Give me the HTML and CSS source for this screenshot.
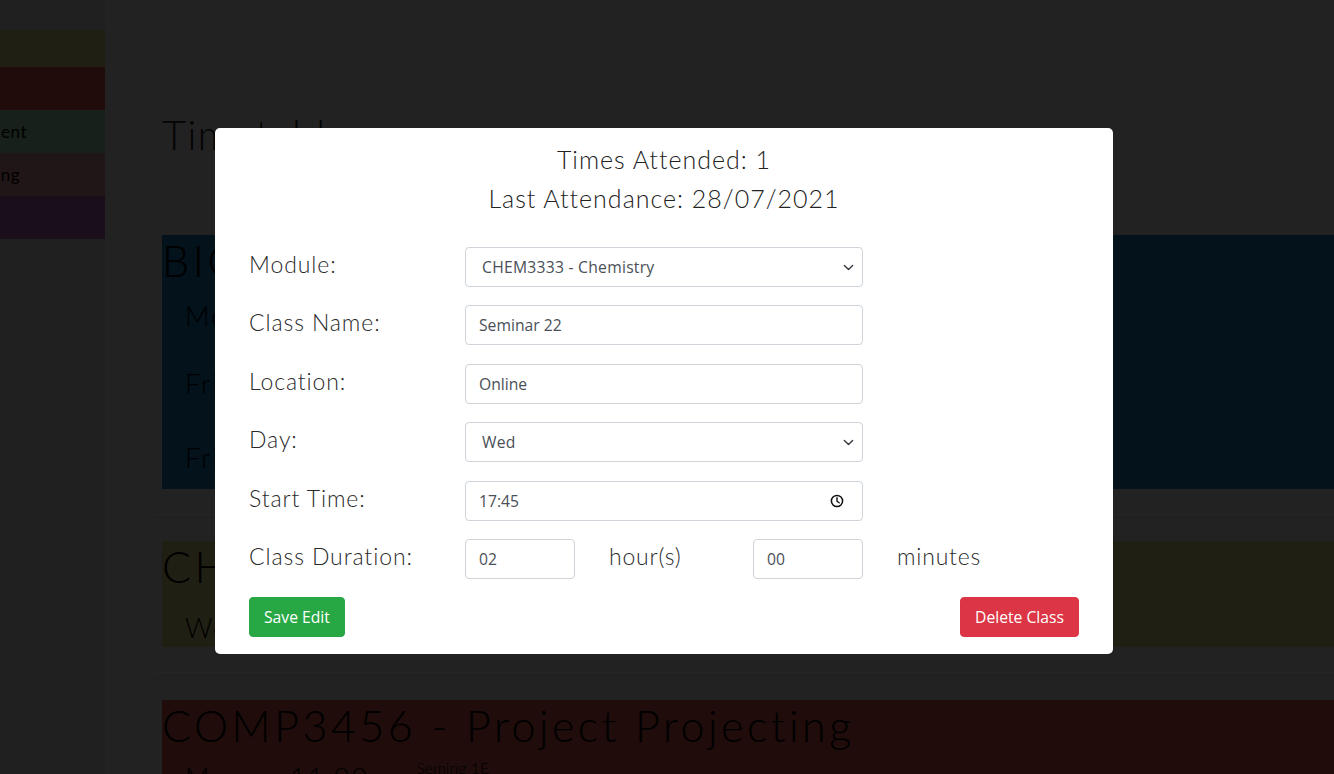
FILE: index.html
```html
<!DOCTYPE html>
<html lang="en">
<head>
<meta charset="utf-8">
<title>Timetable</title>
<link rel="stylesheet" href="styles.css">
</head>
<body>
<div class="page">
  <aside class="sidebar">
    <div class="side-item olive"><span class="clip"></span></div>
    <div class="side-item red"><span class="clip"></span></div>
    <div class="side-item green"><span class="clip">Assessment</span></div>
    <div class="side-item rose"><span class="clip">Programming</span></div>
    <div class="side-item purple"><span class="clip"></span></div>
  </aside>
  <main class="main">
    <h1 class="title">Timetable</h1>
    <section class="card card-blue">
      <h2 class="card-title">BIO2222 - Biology</h2>
      <div class="card-row">Mon</div>
      <div class="card-row">Fri</div>
      <div class="card-row">Fri</div>
    </section>
    <hr class="divider">
    <section class="card card-olive">
      <h2 class="card-title">CHEM3333 - Chemistry</h2>
      <div class="card-row">Wed</div>
    </section>
    <hr class="divider">
    <section class="card card-red">
      <h2 class="card-title">COMP3456 - Project Projecting</h2>
      <div class="card-row"><span class="day">Mon</span><span class="time">11:00</span><span class="loc">Seming 1E</span></div>
    </section>
  </main>
</div>

<div class="modal">
  <div class="stats">
    <div>Times Attended: 1</div>
    <div>Last Attendance: 28/07/2021</div>
  </div>
  <form class="form">
    <div class="form-row">
      <label class="label">Module:</label>
      <select class="control select">
        <option>CHEM3333 - Chemistry</option>
      </select>
    </div>
    <div class="form-row">
      <label class="label">Class Name:</label>
      <input class="control" type="text" value="Seminar 22">
    </div>
    <div class="form-row">
      <label class="label">Location:</label>
      <input class="control" type="text" value="Online">
    </div>
    <div class="form-row">
      <label class="label">Day:</label>
      <select class="control select">
        <option>Wed</option>
      </select>
    </div>
    <div class="form-row">
      <label class="label">Start Time:</label>
      <div class="time-wrap">
        <input class="control" type="text" value="17:45">
        <svg class="clock" width="14" height="14" viewBox="0 0 14 14" aria-hidden="true">
          <circle cx="7" cy="7" r="5.6" fill="none" stroke="#111" stroke-width="1.5"/>
          <path d="M7 3.8V7.2L9.2 8.8" fill="none" stroke="#111" stroke-width="1.4" stroke-linecap="round"/>
        </svg>
      </div>
    </div>
    <div class="form-row">
      <label class="label">Class Duration:</label>
      <div class="duration">
        <input class="control small" type="text" value="02">
        <span class="unit">hour(s)</span>
        <input class="control small" type="text" value="00">
        <span class="unit">minutes</span>
      </div>
    </div>
    <div class="actions">
      <button type="button" class="btn btn-green">Save Edit</button>
      <button type="button" class="btn btn-red">Delete Class</button>
    </div>
  </form>
</div>
</body>
</html>
```
FILE: styles.css
```css
html, body {
  margin: 0;
  height: 100%;
  overflow: hidden;
}
body {
  background: #222222;
  font-family: "Lato", "DejaVu Sans", sans-serif;
  font-weight: 300;
  color: #000;
}
.page {
  display: flex;
  height: 774px;
  overflow: hidden;
}
.sidebar {
  width: 105px;
  flex: none;
  background: #202020;
  padding-top: 30px;
  overflow: hidden;
}
.side-item {
  height: 43px;
  display: flex;
  align-items: center;
  font-size: 17px;
  font-weight: 400;
  letter-spacing: 0.5px;
}
.side-item:first-child { height: 37px; }
.clip {
  display: inline-block;
  width: 27px;
  overflow: hidden;
  white-space: nowrap;
  direction: rtl;
  text-align: left;
}
.rose .clip { width: 20px; }
.olive { background: #201f14; }
.red { background: #1f0c0b; }
.green { background: #17201a; }
.rose { background: #201617; }
.purple { background: #1a0e1a; }

.main {
  flex: 1;
  padding: 110px 0 0 57px;
  min-width: 0;
}
.title {
  margin: 0;
  font-size: 42px;
  font-weight: 300;
  line-height: 48px;
  letter-spacing: 1px;
  color: #050505;
}
.card {
  margin-right: -40px;
}
.card-blue {
  margin-top: 77px;
  height: 254px;
  background: #03121b;
}
.card-olive {
  height: 106px;
  background: #201f14;
}
.card-red {
  height: 120px;
  background: #1f0c0b;
}
.card-title {
  margin: 0;
  padding-top: 2px;
  font-size: 43px;
  font-weight: 300;
  line-height: 48px;
  letter-spacing: 3.5px;
  white-space: nowrap;
}
.card-row {
  padding-left: 23px;
  font-size: 27px;
  line-height: 74px;
  height: 74px;
  letter-spacing: 2px;
  display: flex;
  align-items: baseline;
}
.card-blue .card-row:first-of-type { height: 62px; line-height: 62px; }
.card-red .card-row { line-height: 56px; align-items: flex-start; }
.card-red .card-row .time { margin-left: 45px; }
.card-red .card-row .loc {
  margin: 8px 0 0 47px;
  font-size: 16px;
  line-height: 20px;
  letter-spacing: 0;
}
.divider {
  margin: 25px 0 26px -7px;
  border: 0;
  border-top: 1px solid #262626;
}
.card-olive + .divider { margin-bottom: 27px; }

/* modal */
.modal {
  position: fixed;
  left: 215px;
  top: 128px;
  width: 898px;
  box-sizing: border-box;
  padding: 12px 34px 17px;
  background: #fff;
  border-radius: 5px;
  color: #212529;
}
.stats {
  text-align: center;
  font-size: 25px;
  line-height: 39px;
  letter-spacing: 1px;
  color: #222;
}
.form {
  margin: 29px 0 0;
  display: flex;
  flex-direction: column;
  gap: 18.4px;
}
.form-row {
  display: flex;
  align-items: flex-start;
}
.label {
  width: 216px;
  flex: none;
  font-size: 23px;
  line-height: 35px;
  letter-spacing: 0.9px;
  color: #2a2a2a;
}
.control {
  box-sizing: border-box;
  width: 398px;
  height: 40px;
  margin: 0;
  padding: 0 13px;
  border: 1px solid #ced4da;
  border-radius: 4px;
  background: #fff;
  font-family: "Open Sans", "Noto Sans", sans-serif;
  font-size: 15.7px;
  font-weight: 400;
  color: #495057;
  outline: none;
}
.select {
  appearance: none;
  -webkit-appearance: none;
  padding-left: 16px;
  background-image: url("data:image/svg+xml,%3csvg xmlns='http://www.w3.org/2000/svg' viewBox='0 0 16 16'%3e%3cpath fill='none' stroke='%23343a40' stroke-linecap='round' stroke-linejoin='round' stroke-width='2' d='M2 5l6 6 6-6'/%3e%3c/svg%3e");
  background-repeat: no-repeat;
  background-position: right 8px center;
  background-size: 11px 11px;
  letter-spacing: 0.25px;
}
.time-wrap {
  position: relative;
  width: 398px;
}
.clock {
  position: absolute;
  right: 19px;
  top: 13px;
}
.duration {
  display: grid;
  grid-template-columns: repeat(4, 144px);
  align-items: start;
}
.control.small {
  width: 110px;
}
.unit {
  font-size: 23px;
  line-height: 35px;
  letter-spacing: 0.8px;
  color: #2a2a2a;
}
.actions {
  display: flex;
  justify-content: space-between;
}
.btn {
  height: 40px;
  padding: 0 14px;
  border: 1px solid transparent;
  border-radius: 4px;
  font-family: "Open Sans", "Noto Sans", sans-serif;
  font-size: 15.7px;
  font-weight: 400;
  color: #fff;
  cursor: pointer;
}
.btn-green { background: #28a745; border-color: #28a745; }
.btn-red { background: #dc3545; border-color: #dc3545; }
```
